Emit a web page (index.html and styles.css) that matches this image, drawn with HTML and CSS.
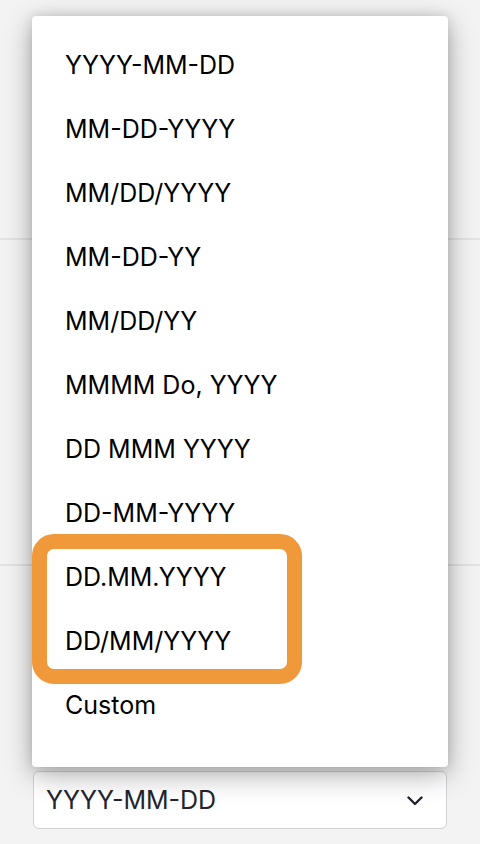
FILE: index.html
```html
<!DOCTYPE html>
<html lang="en">
<head>
<meta charset="utf-8">
<title>Date format</title>
<link rel="stylesheet" href="styles.css">
</head>
<body>
<div class="page">
  <div class="rows">
    <div class="row row-a"></div>
    <div class="row row-b"></div>
    <div class="row row-c">
      <div class="select">
        <span class="select-value">YYYY-MM-DD</span>
        <svg class="chevron" width="16" height="10" viewBox="0 0 16 10"><path d="M1.5 1.5 L8 8 L14.5 1.5" fill="none" stroke="#23232f" stroke-width="2.4" stroke-linecap="round" stroke-linejoin="round"/></svg>
      </div>
    </div>
  </div>
  <ul class="menu">
    <li class="item">YYYY-MM-DD</li>
    <li class="item">MM-DD-YYYY</li>
    <li class="item">MM/DD/YYYY</li>
    <li class="item">MM-DD-YY</li>
    <li class="item">MM/DD/YY</li>
    <li class="item">MMMM Do, YYYY</li>
    <li class="item">DD MMM YYYY</li>
    <li class="item">DD-MM-YYYY</li>
    <li class="highlight">
      <ul class="group">
        <li class="item">DD.MM.YYYY</li>
        <li class="item">DD/MM/YYYY</li>
      </ul>
    </li>
    <li class="item">Custom</li>
  </ul>
</div>
</body>
</html>
```
FILE: styles.css
```css
* { box-sizing: border-box; }
html, body { margin: 0; padding: 0; }
body {
  background: #f3f3f3;
  font-family: Inter, "Noto Sans", sans-serif;
  width: 480px;
  height: 844px;
  overflow: hidden;
}
.page {
  position: relative;
  width: 480px;
  height: 844px;
}
.rows {
  display: flex;
  flex-direction: column;
  height: 100%;
}
.row-a {
  height: 240px;
  border-bottom: 2px solid #e2e2e2;
}
.row-b {
  height: 326px;
  border-bottom: 2px solid #e2e2e2;
}
.row-c {
  padding: 205px 33px 0 33px;
}
.select {
  height: 58px;
  background: #fff;
  border: 1.5px solid #d2d2d4;
  border-radius: 6px;
  display: flex;
  align-items: center;
  justify-content: space-between;
  padding: 0 23px 0 12px;
}
.select-value {
  font-size: 25px;
  color: #23232f;
}
.chevron { display: block; margin-top: 2px; }
.menu {
  position: absolute;
  top: 16px;
  left: 32px;
  width: 416px;
  height: 751px;
  margin: 0;
  padding: 17px 0 0 0;
  list-style: none;
  background: #fff;
  border-radius: 4px;
  box-shadow: 0 8px 28px rgba(0,0,0,0.32), 0 0 12px rgba(0,0,0,0.12);
}
.item {
  height: 64px;
  display: flex;
  align-items: center;
  padding-left: 33px;
  font-size: 25px;
  color: #000;
}
.highlight {
  margin: -11px 0 -11px 0;
  width: 270px;
  border: 15px solid #f0993b;
  border-radius: 22px;
  background: #fff;
}
.group {
  list-style: none;
  margin: -4px 0;
  padding: 0;
}
.group .item {
  padding-left: 18px;
}
```
